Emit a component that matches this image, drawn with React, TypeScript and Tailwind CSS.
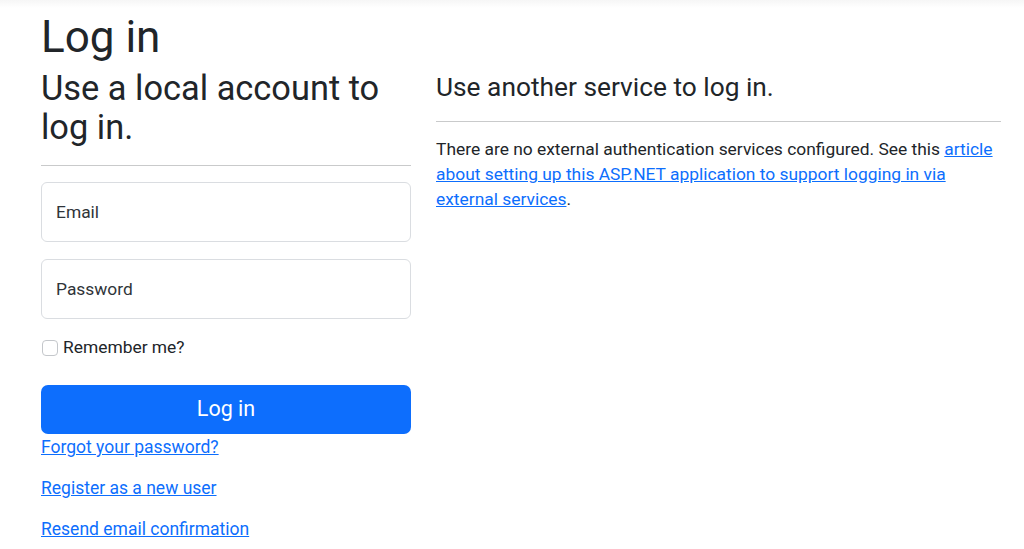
import { useState } from 'react'

const font = { fontFamily: 'Roboto, "Noto Sans", "Liberation Sans", sans-serif' }

export default function App() {
  const [email, setEmail] = useState('')
  const [password, setPassword] = useState('')
  const [remember, setRemember] = useState(false)

  return (
    <main className="min-h-screen bg-white text-[#212529]" style={font}>
      <div className="h-[8px] bg-gradient-to-b from-[#f6f6f6] to-white" />
      <div className="pl-[41px]">
        <h1 className="mt-[3px] text-[44px] leading-[52px] font-normal">Log in</h1>

        <div className="flex gap-[25px] mt-[6px]">
          {/* LOCAL ACCOUNT */}
          <section className="w-[370px]">
            <h2 className="text-[34.4px] leading-[39px] font-normal">Use a local account to log in.</h2>
            <hr className="mt-[18px] border-t border-[#c9cacb]" />

            <form onSubmit={(e) => e.preventDefault()}>
              <div className="mt-[16px] relative">
                <input
                  type="email"
                  value={email}
                  onChange={(e) => setEmail(e.target.value)}
                  placeholder="Email"
                  className="w-full h-[60px] border border-[#dadde1] rounded-[6px] px-[14px] text-[17.4px] placeholder:text-[#2f3439] focus:outline-none"
                />
              </div>
              <div className="mt-[17px] relative">
                <input
                  type="password"
                  value={password}
                  onChange={(e) => setPassword(e.target.value)}
                  placeholder="Password"
                  className="w-full h-[60px] border border-[#dadde1] rounded-[6px] px-[14px] text-[17.4px] placeholder:text-[#2f3439] focus:outline-none"
                />
              </div>

              <label className="mt-[16px] h-[25px] flex items-center gap-[5px] text-[17.4px]">
                <input
                  type="checkbox"
                  checked={remember}
                  onChange={(e) => setRemember(e.target.checked)}
                  className="appearance-none w-[16px] h-[16px] border border-[#c4c7cb] rounded-[4px] bg-white ml-[1px]"
                />
                Remember me?
              </label>

              <button
                type="submit"
                className="mt-[25px] w-full h-[49px] bg-[#0d6efd] text-white text-[21.5px] rounded-[7px]"
              >
                Log in
              </button>
            </form>

            <div className="text-[17.5px] leading-[25px] mt-[1px]">
              <p className="mb-[16px]"><a href="#" className="text-[#0d6efd] underline">Forgot your password?</a></p>
              <p className="mb-[16px]"><a href="#" className="text-[#0d6efd] underline">Register as a new user</a></p>
              <p><a href="#" className="text-[#0d6efd] underline">Resend email confirmation</a></p>
            </div>
          </section>

          {/* EXTERNAL */}
          <section className="w-[565px] pt-[2px]">
            <h3 className="text-[26.3px] leading-[32px] font-normal">Use another service to log in.</h3>
            <hr className="mt-[18px] border-t border-[#c9cacb]" />
            <p className="mt-[15px] text-[17.4px] leading-[25px]">
              There are no external authentication services configured. See this{' '}
              <a href="#" className="text-[#0d6efd] underline">
                article about setting up this ASP.NET application to support logging in via external services
              </a>
              .
            </p>
          </section>
        </div>
      </div>
    </main>
  )
}
